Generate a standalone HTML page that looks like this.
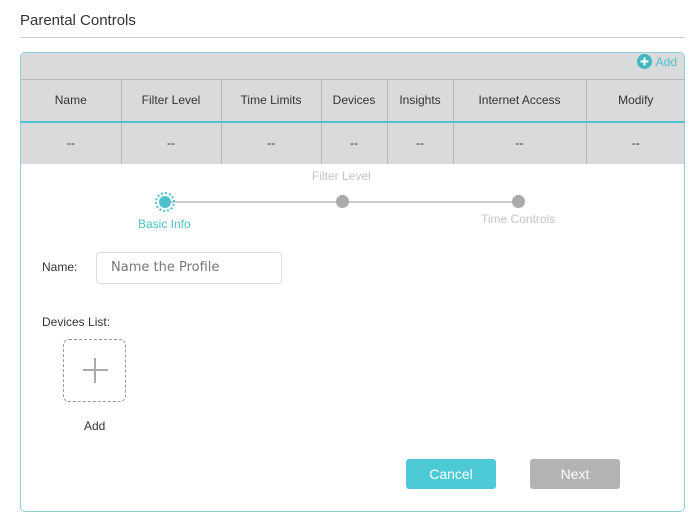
<!DOCTYPE html>
<html><head><style>
*{margin:0;padding:0;box-sizing:border-box}
body{width:691px;height:525px;background:#fff;font-family:"Liberation Sans",sans-serif;position:relative;overflow:hidden;color:#333}
.a{position:absolute}
.title{left:20px;top:12px;font-size:15px;color:#333}
.hr{left:20px;top:37px;width:665px;height:1px;background:#ccc}
.panel{left:20px;top:52px;width:665px;height:460px;border:1px solid #8fcfd6;border-radius:5px;background:#fff;overflow:hidden}
.top{left:0;top:0;width:665px;height:111px;background:#d8dadb}
table{position:absolute;left:0;top:26px;width:664px;border-collapse:collapse;font-size:12px;color:#333}
td{border-right:1px solid #b8b8b8;text-align:center;height:42px}
td:last-child{border-right:none}
tr.h td{border-top:1px solid #b8b8b8;border-bottom:2px solid #4ec1ca}
.btn{height:30px;width:90px;border-radius:3px;color:#fff;font-size:14px;text-align:center;line-height:30px}
</style></head><body>
<div class="a title">Parental Controls</div>
<div class="a hr"></div>
<div class="a panel">
 <div class="a top"></div>
 <div class="a" style="right:7px;top:1px;font-size:12px;color:#4ec1ca;display:flex;align-items:center;gap:4px">
  <svg width="15" height="15" viewBox="0 0 15 15"><circle cx="7.5" cy="7.5" r="7.5" fill="#3fb6c1"/><path d="M7.5 3.5v8M3.5 7.5h8" stroke="#fff" stroke-width="2"/></svg>Add</div>
 <table>
  <tr class="h"><td style="width:100px">Name</td><td style="width:100px">Filter Level</td><td style="width:100px">Time Limits</td><td style="width:66px">Devices</td><td style="width:66px">Insights</td><td style="width:133px">Internet Access</td><td>Modify</td></tr>
  <tr><td>--</td><td>--</td><td>--</td><td>--</td><td>--</td><td>--</td><td>--</td></tr>
 </table>
 <div class="a" style="left:291px;top:116px;font-size:12px;color:#c4c4c4">Filter Level</div>
 <div class="a" style="left:145px;top:148px;width:353px;height:2px;background:#ccc"></div>
 <div class="a" style="left:134px;top:139px;width:20px;height:20px;border:2px dotted #4ec1ca;border-radius:50%"></div>
 <div class="a" style="left:138px;top:143px;width:12px;height:12px;background:#4ec1ca;border-radius:50%"></div>
 <div class="a" style="left:315px;top:142px;width:13px;height:13px;background:#aaa;border-radius:50%"></div>
 <div class="a" style="left:491px;top:142px;width:13px;height:13px;background:#aaa;border-radius:50%"></div>
 <div class="a" style="left:117px;top:164px;font-size:12px;color:#4ec1ca">Basic Info</div>
 <div class="a" style="left:460px;top:159px;font-size:12px;color:#c4c4c4">Time Controls</div>
 <div class="a" style="left:21px;top:207px;font-size:12px">Name:</div>
 <div class="a" style="left:75px;top:199px;width:186px;height:32px;border:1px solid #ddd;border-radius:4px;font-size:13px;color:#777;padding-left:14px;line-height:30px;font-family:'DejaVu Sans',sans-serif">Name the Profile</div>
 <div class="a" style="left:21px;top:262px;font-size:12px">Devices List:</div>
 <div class="a" style="left:42px;top:286px;width:63px;height:63px;border:1px dashed #999;border-radius:6px"></div>
 <div class="a" style="left:62px;top:316px;width:25px;height:2px;background:#aaa"></div>
 <div class="a" style="left:73px;top:305px;width:2px;height:25px;background:#aaa"></div>
 <div class="a" style="left:63px;top:366px;font-size:12px">Add</div>
 <div class="a btn" style="left:385px;top:406px;background:#4ecad6">Cancel</div>
 <div class="a btn" style="left:509px;top:406px;background:#b3b3b3">Next</div>
</div>
</body></html>
